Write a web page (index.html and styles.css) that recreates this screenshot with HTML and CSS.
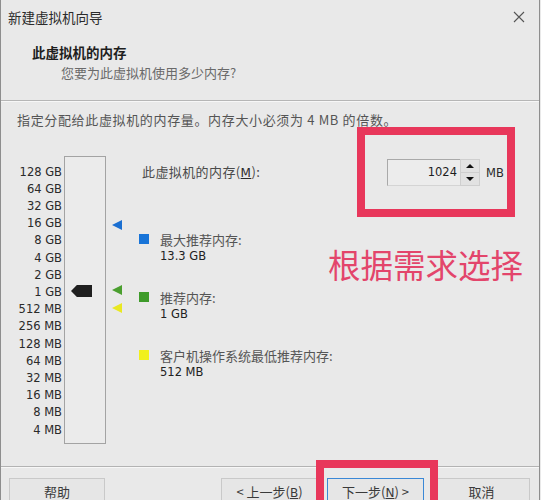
FILE: index.html
```html
<!DOCTYPE html>
<html lang="zh-CN">
<head>
<meta charset="utf-8">
<title>新建虚拟机向导</title>
<link rel="stylesheet" href="styles.css">
</head>
<body>
<div class="window">
  <div class="titlebar">
    <span class="title">新建虚拟机向导</span>
    <span class="close" aria-label="关闭">
      <svg width="12" height="12" viewBox="0 0 12 12"><path d="M1 1L11 11M11 1L1 11" stroke="#555" stroke-width="1.1" fill="none"/></svg>
    </span>
  </div>

  <div class="header">
    <div class="heading">此虚拟机的内存</div>
    <div class="subheading">您要为此虚拟机使用多少内存?</div>
  </div>

  <div class="content">
    <p class="hint">指定分配给此虚拟机的内存量。内存大小必须为 4 MB 的倍数。</p>

    <div class="main">
      <ul class="ticks">
        <li>128 GB</li><li>64 GB</li><li>32 GB</li><li>16 GB</li>
        <li>8 GB</li><li>4 GB</li><li>2 GB</li><li>1 GB</li>
        <li>512 MB</li><li>256 MB</li><li>128 MB</li><li>64 MB</li>
        <li>32 MB</li><li>16 MB</li><li>8 MB</li><li>4 MB</li>
      </ul>

      <div class="scale">
        <span class="thumb" style="top: 128px"></span>
      </div>

      <div class="markers">
        <span class="tri tri-blue" style="top: 64px"></span>
        <span class="tri tri-green" style="top: 129px"></span>
        <span class="tri tri-yellow" style="top: 147px"></span>
      </div>

      <div class="panel">
        <div class="mem-row">
          <label class="mem-label">此虚拟机的内存(<u>M</u>):</label>
          <div class="spin">
            <span class="spin-value">1024</span>
            <span class="spin-btns">
              <span class="spin-up"></span>
              <span class="spin-down"></span>
            </span>
          </div>
          <span class="unit">MB</span>
        </div>

        <div class="legend">
          <div class="legend-item">
            <div class="legend-name"><span class="swatch sw-blue"></span>最大推荐内存:</div>
            <div class="legend-value">13.3 GB</div>
          </div>
          <div class="legend-item">
            <div class="legend-name"><span class="swatch sw-green"></span>推荐内存:</div>
            <div class="legend-value">1 GB</div>
          </div>
          <div class="legend-item">
            <div class="legend-name"><span class="swatch sw-yellow"></span>客户机操作系统最低推荐内存:</div>
            <div class="legend-value">512 MB</div>
          </div>
        </div>
      </div>
    </div>
  </div>

  <div class="footer">
    <button class="btn">帮助</button>
    <span class="spacer"></span>
    <button class="btn">&lt; 上一步(<u>B</u>)</button>
    <button class="btn btn-focus">下一步(<u>N</u>) &gt;</button>
    <button class="btn">取消</button>
  </div>

  <div class="note-box note-mem"></div>
  <div class="note-box note-next"></div>
  <div class="note-text">根据需求选择</div>
</div>
</body>
</html>
```

FILE: styles.css
```css
* {
  box-sizing: border-box;
}

html, body {
  margin: 0;
  padding: 0;
  background: #e9e9e9;
}

body {
  width: 541px;
  height: 500px;
  overflow: hidden;
  font-family: "DejaVu Sans", "Noto Sans CJK SC", sans-serif;
  color: #222;
}

.window {
  position: relative;
  width: 540px;
  height: 500px;
  border-left: 1px solid #8e8e8e;
  border-right: 1px solid #8e8e8e;
  background: #e9e9e9;
}

/* title bar */
.titlebar {
  height: 34px;
  display: flex;
  align-items: center;
  justify-content: space-between;
  padding: 0 14px 0 7px;
}

.title {
  font-family: "Noto Sans CJK SC", sans-serif;
  font-size: 13.5px;
  line-height: 18px;
  color: #2a2a2a;
}

.close {
  display: flex;
  width: 12px;
  height: 12px;
}

/* header */
.header {
  height: 67px;
  padding: 9px 0 0 31px;
  border-bottom: 1px solid #b6b6b6;
  box-shadow: 0 1px 0 #f7f7f7;
}

.heading {
  font-family: "Noto Sans CJK SC", sans-serif;
  font-size: 13.5px;
  font-weight: 700;
  line-height: 18px;
  color: #1e1e1e;
}

.subheading {
  font-family: "Noto Sans CJK SC", sans-serif;
  font-size: 13px;
  line-height: 18px;
  margin: 3px 0 0 29px;
  color: #6a6a6a;
}

/* body */
.hint {
  margin: 10px 0 0 16px;
  font-family: "Noto Sans CJK SC", sans-serif;
  font-size: 13px;
  line-height: 18px;
  color: #555;
  letter-spacing: 0.65px;
}

.main {
  display: flex;
  margin-top: 27px;
  height: 288px;
}

.ticks {
  list-style: none;
  margin: 0;
  padding: 7.6px 0 0 0;
  width: 61px;
  text-align: right;
  font-size: 11.5px;
  line-height: 17.2px;
  color: #2a2a2a;
}

.scale {
  position: relative;
  margin-left: 2px;
  width: 42px;
  height: 288px;
  border: 1px solid #a3a3a3;
  background: #ebebeb;
}

.thumb {
  position: absolute;
  left: 6px;
  width: 21px;
  height: 12px;
  background: #1f1f1f;
  clip-path: polygon(0 50%, 28% 0, 100% 0, 100% 100%, 28% 100%);
}

.markers {
  position: relative;
  width: 33px;
}

.tri {
  position: absolute;
  left: 6px;
  width: 0;
  height: 0;
  border-top: 5px solid transparent;
  border-bottom: 5px solid transparent;
  border-right: 10px solid;
}

.tri-blue { border-right-color: #1b6fd1; }
.tri-green { border-right-color: #4b9f2f; }
.tri-yellow { border-right-color: #e9e822; }

.panel {
  flex: 1;
}

.mem-row {
  display: flex;
  align-items: center;
  height: 27px;
  margin-top: 3px;
}

.mem-label {
  flex: 0 0 248px;
  padding-left: 3px;
  font-family: "Noto Sans CJK SC", sans-serif;
  font-size: 13px;
  line-height: 18px;
  letter-spacing: 0.4px;
  color: #4a4a4a;
}

.mem-label u {
  font-family: "DejaVu Sans", sans-serif;
  font-size: 12px;
  color: #2a2a2a;
}

.spin {
  display: flex;
  height: 27px;
}

.spin-value {
  width: 73px;
  height: 27px;
  padding-right: 3px;
  border: 1px solid #a9a9a9;
  border-right: none;
  border-bottom-color: #d4d4d4;
  background: #ececec;
  text-align: right;
  font-size: 11.5px;
  line-height: 24px;
  color: #1e1e1e;
}

.spin-btns {
  display: flex;
  flex-direction: column;
  width: 20px;
  height: 27px;
  border: 1px solid #cfcfcf;
  background: #e2e2e2;
}

.spin-up,
.spin-down {
  flex: 1;
  display: flex;
  align-items: center;
  justify-content: center;
}

.spin-up {
  border-bottom: 1px solid #cfcfcf;
}

.spin-up::before,
.spin-down::before {
  content: "";
  width: 0;
  height: 0;
  border-left: 4px solid transparent;
  border-right: 4px solid transparent;
}

.spin-up::before { border-bottom: 4px solid #111; }
.spin-down::before { border-top: 4px solid #111; }

.unit {
  margin-left: 6px;
  font-size: 11.5px;
  color: #2a2a2a;
}

.legend {
  margin-top: 44.5px;
  display: flex;
  flex-direction: column;
  gap: 24px;
}

.legend-name {
  display: flex;
  align-items: center;
  font-family: "Noto Sans CJK SC", sans-serif;
  font-size: 13px;
  line-height: 17px;
  color: #555;
}

.swatch {
  width: 10px;
  height: 10px;
  margin-right: 11px;
}

.sw-blue { background: #1874d8; }
.sw-green { background: #3e9b2a; }
.sw-yellow { background: #f1f01c; }

.legend-value {
  padding-left: 21px;
  font-size: 11.5px;
  line-height: 17px;
  color: #222;
}

/* button row */
.footer {
  position: absolute;
  left: 0;
  right: 0;
  top: 466px;
  height: 34px;
  display: flex;
  gap: 9px;
  padding: 11px 9px 0 8px;
  border-top: 1px solid #b3b3b3;
  box-shadow: inset 0 1px 0 #f7f7f7;
}

.spacer {
  flex: 1;
}

.btn {
  width: 97px;
  height: 28px;
  padding: 0;
  border: 1px solid #c9c9c9;
  background: #e6e6e6;
  font-family: "Noto Sans CJK SC", sans-serif;
  font-size: 13px;
  line-height: 22px;
  color: #3a3a3a;
  text-align: center;
}

.btn:first-child {
  width: 96px;
}

.btn u {
  font-family: "DejaVu Sans", sans-serif;
  font-size: 12px;
}

.btn-focus {
  border-color: #3b88d6;
}

/* annotations drawn over the dialog */
.note-box {
  position: absolute;
  border: 8px solid #e8375b;
}

.note-mem {
  left: 356px;
  top: 127px;
  width: 158px;
  height: 90px;
}

.note-next {
  left: 315px;
  top: 460px;
  width: 122px;
  height: 60px;
}

.note-text {
  position: absolute;
  left: 327px;
  top: 242px;
  font-family: "Noto Sans CJK SC", sans-serif;
  font-size: 32.5px;
  line-height: 44px;
  color: #e3456b;
}
```
